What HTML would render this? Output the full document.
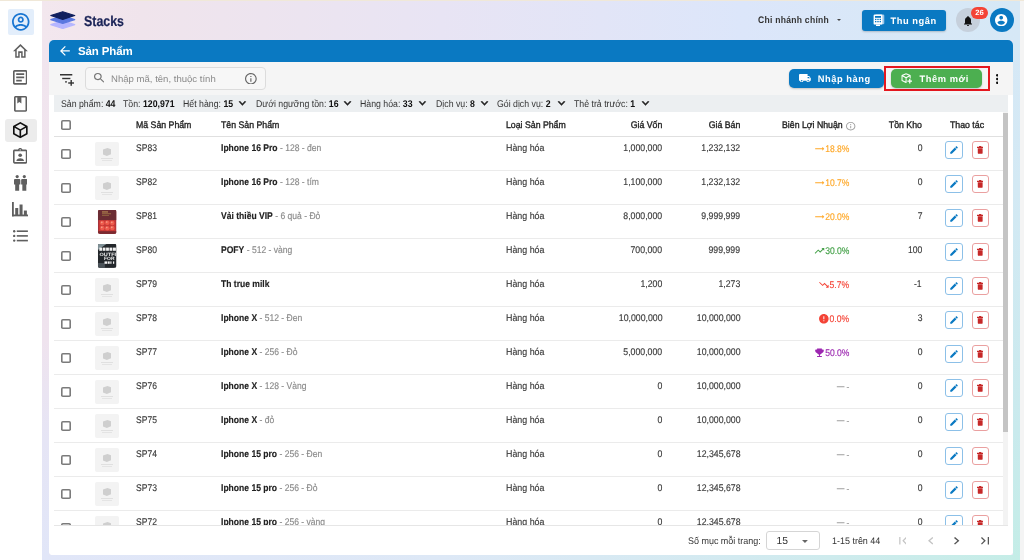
<!DOCTYPE html>
<html lang="vi">
<head>
<meta charset="utf-8">
<title>Stacks - Sản Phẩm</title>
<style>
*{box-sizing:border-box;margin:0;padding:0}
html,body{width:1024px;height:560px;overflow:hidden}
body{font-family:"Liberation Sans",sans-serif;color:#333;position:relative;text-rendering:geometricPrecision;
 background:
  linear-gradient(to bottom,#f1e5ee 0px,#efe3ee 300px,#e6e5f5 400px,#e1e6f8 520px) 42px 40px/7px 520px no-repeat,
  linear-gradient(to bottom,#d6e8f6 0px,#d3e9f4 150px,#c9eaed 390px,#c4ede7 520px) 1013px 40px/7px 520px no-repeat,
  linear-gradient(to right,#e1e6f8 0px,#dde8f6 400px,#d2eaf0 700px,#c5ede7 978px) 42px 555px/978px 5px no-repeat,
  linear-gradient(to right,#f3e7ee 0px,#f0e4ec 100px,#ece4f0 260px,#e8e4f4 400px,#e2e5f7 560px,#dce6fa 700px,#d8e8f7 860px,#d6e8f6 978px) 42px 0px/978px 40px no-repeat,
  #e6e6f4;}
.abs{position:absolute}
#app{position:absolute;left:0;top:0;width:1024px;height:560px;will-change:transform}
#topline{left:0;top:0;width:1024px;height:1px;background:#f0e8d8;z-index:20}
#pgscroll{left:1020px;top:1px;width:4px;height:559px;background:#f4f4f4}
#side{left:0;top:0;width:42px;height:560px;background:#fff}
#side .act1{left:8px;top:9px;width:26px;height:25.500px;background:#e3eefb;border-radius:2px}
#side .act2{left:5px;top:119px;width:31.500px;height:23px;background:#ececec;border-radius:3px}
/* header */
#logo{left:50.400px;top:10.800px;width:25.500px;height:18.100px}
#brand{left:84px;top:13px;font-size:14.500px;font-weight:bold;color:#1b2457;line-height:18px;transform:scaleX(.855);transform-origin:0 50%;-webkit-text-stroke:0.200px #1b2457}
#branch{left:758px;top:15px;font-size:9.500px;font-weight:bold;color:#333;letter-spacing:0.300px;line-height:12px;white-space:nowrap;transform:scaleX(.9);transform-origin:0 50%}
#caret{left:837.300px;top:19.400px;width:0;height:0;border-left:2.400px solid transparent;border-right:2.400px solid transparent;border-top:2.600px solid #444}
.btn{position:absolute;color:#fff;font-weight:bold;font-size:9.300px;letter-spacing:0.550px;border-radius:5px;white-space:nowrap;line-height:13px}
#cashier{left:862.200px;top:10px;width:84px;height:20.600px;background:#0a79c2;border-radius:3px;box-shadow:0 1px 2px rgba(0,0,0,.2)}
#cashier span{position:absolute;left:28.300px;top:5.300px}
#bell{left:956px;top:8px;width:24px;height:24px;border-radius:50%;background:#c6d0dc}
#badge{left:971px;top:6.800px;width:17px;height:12px;border-radius:6px;background:#f44336;color:#fff;font-size:7.600px;font-weight:bold;text-align:center;line-height:12px}
#avatar{left:989.600px;top:8.200px;width:24px;height:24px;border-radius:50%;background:#0a79c2}
/* card */
#card{left:49px;top:40px;width:964px;height:515px;background:#fff;border-radius:5px 5px 4px 4px;overflow:hidden}
#title{left:0;top:0;width:964px;height:22px;background:#0a79c2}
#title span{position:absolute;left:29px;top:4.500px;color:#fff;font-weight:bold;font-size:11.500px;line-height:14px;white-space:nowrap;letter-spacing:-0.140px}
#tool{left:0;top:22px;width:964px;height:33px;background:#f5f5f5}
#search{left:36px;top:5px;width:181px;height:23px;border:1px solid #dcdcdc;border-radius:4px;background:#f7f7f7}
#search span{position:absolute;left:25px;top:5px;font-size:9.300px;color:#8a8a8a;white-space:nowrap;line-height:12px;transform:scaleX(1.029);transform-origin:0 50%}
#import{left:740.400px;top:6.700px;width:94.400px;height:19.400px;background:#0a79c2;box-shadow:0 1px 2px rgba(0,0,0,.2)}
#import span{position:absolute;left:28.400px;top:4.400px}
#redbox{left:835.200px;top:3.800px;width:105.600px;height:24.900px;border:2px solid #e5171f}
#addnew{left:842px;top:6.800px;width:91px;height:19.200px;background:#4caf50;box-shadow:0 1px 2px rgba(0,0,0,.2)}
#addnew span{position:absolute;left:28.600px;top:4.300px}
#stats{left:5px;top:55px;width:954px;height:17px;background:#eceff1;font-size:9.800px;color:#333;white-space:nowrap;line-height:17px}
#stats b{color:#111}
#stats span{position:absolute;top:0.600px;transform:scaleX(.893);transform-origin:0 50%}
/* table */
#tbl{left:5px;top:72px;width:954px;height:414px;overflow:hidden;border-bottom:1px solid #e6e6e6}
#thead{left:0;top:0;width:949px;height:25px;border-bottom:1px solid #e0e0e0;font-size:9.500px;color:#222;background:#fff;-webkit-text-stroke:0.350px #222}
#thead span{position:absolute;top:8px;line-height:12px;white-space:nowrap;transform:scaleX(.92);transform-origin:0 50%}
#thead span.cost,#thead span.price,#thead span.stock,.row span.cost,.row span.price,.row span.stock,.row span.margin{transform-origin:100% 50%}
.row{position:absolute;left:0;width:949px;height:34px;border-bottom:1px solid #ebebeb;font-size:9.700px;color:#3a3a3a}
.row span{position:absolute;top:6px;line-height:12px;white-space:nowrap;transform:scaleX(.883);transform-origin:0 50%}
.cb{position:absolute;left:7.100px;width:10.300px;height:10.300px;border-radius:1.800px;background:#fff;box-shadow:inset 0 0 0 1.600px #7b7b7b}
.row .cb{top:12px}
.img{position:absolute;left:41px;top:5px;width:24px;height:24px;border-radius:2px;background:#f3f3f3}
.code{left:82px}
.name{left:167px;color:#8a8a8a}
.name b{color:#222}
.type{left:452px}
.r{text-align:right}
.cost{right:340.500px}
.price{right:262.500px}
.margin{right:154px}
.stock{right:81px}
.eb,.db{position:absolute;top:4.200px;width:17.600px;height:17.600px;border-radius:3px;background:#fff}
.eb{left:891.200px;border:1px solid #8cc0e8}
.db{left:917.600px;border:1px solid #eaa0a0}
#vscroll{left:949px;top:0;width:5px;height:413px;background:#f3f3f3}
#vthumb{left:949px;top:1px;width:5px;height:318.500px;background:#c4c4c4}
#pager{left:0;top:486px;width:964px;height:29px;background:#fff;font-size:9.500px;color:#333}
#pager span{position:absolute;top:10px;line-height:12px;white-space:nowrap;transform:scaleX(.943);transform-origin:0 50%}
#psel{left:717px;top:5.200px;width:54px;height:19.200px;border:1px solid #d5d5d5;border-radius:3px}
.mi{display:inline-block;width:13px;height:11.500px;vertical-align:-2.500px;margin-right:0}
.eb svg{position:absolute;left:3px;top:3.200px;width:10px;height:10px}
.db svg{position:absolute;left:4.500px;top:4px;width:6.400px;height:7.800px}
.img svg{width:24px;height:24px;display:block}
.ic{position:absolute;display:block}
.chev{position:absolute;top:5px;width:8px;height:8px}
.row span.cost,.row span.price{transform:scaleX(.9)}
.row span.type{transform:scaleX(.915)}
.row span{-webkit-text-stroke:0.150px}
</style>
</head>
<body>
<div id="app">
<div id="topline" class="abs"></div>
<div id="side" class="abs">
 <div class="abs act1"></div>
 <div class="abs act2"></div>

 <svg class="ic" style="left:12.10px;top:12.90px;width:17.50px;height:17.70px" viewBox="2 2 20 20" preserveAspectRatio="none"><path fill="#1976d2" d="M12 2C6.480 2 2 6.480 2 12s4.480 10 10 10 10-4.480 10-10S17.520 2 12 2zM7.070 18.280c.43-.9 3.050-1.780 4.930-1.780s4.510.88 4.930 1.780C15.570 19.360 13.860 20 12 20s-3.570-.64-4.930-1.720zm11.290-1.450c-1.430-1.740-4.900-2.330-6.360-2.330s-4.930.59-6.360 2.330A7.950 7.950 0 014 12c0-4.410 3.590-8 8-8s8 3.590 8 8c0 1.820-.62 3.490-1.640 4.830zM12 6c-1.940 0-3.500 1.560-3.500 3.500S10.060 13 12 13s3.500-1.560 3.500-3.500S13.940 6 12 6zm0 5c-.83 0-1.500-.67-1.500-1.500S11.170 8 12 8s1.500.67 1.500 1.500S12.830 11 12 11z"/></svg>
 <svg class="ic" style="left:12.90px;top:44.00px;width:14.85px;height:13.75px" viewBox="2 3 20 17" preserveAspectRatio="none"><path fill="#5f5f5f" d="M12 5.690l5 4.500V18h-2v-6H9v6H7v-7.810l5-4.500M12 3L2 12h3v8h6v-6h2v6h6v-8h3L12 3z"/></svg>
 <svg class="ic" style="left:13.10px;top:70.10px;width:14.40px;height:14.65px" viewBox="3 3 18 18" preserveAspectRatio="none"><path fill="#5f5f5f" d="M19 5v14H5V5h14m0-2H5c-1.100 0-2 .9-2 2v14c0 1.100.9 2 2 2h14c1.100 0 2-.9 2-2V5c0-1.100-.9-2-2-2zM14 17H7v-2h7v2zm3-4H7v-2h10v2zm0-4H7V7h10v2z"/></svg>
 <svg class="ic" style="left:13.75px;top:96.00px;width:13.15px;height:15.75px" viewBox="4 2 16 20" preserveAspectRatio="none"><path fill="#5f5f5f" d="M18 2H6c-1.100 0-2 .9-2 2v16c0 1.100.9 2 2 2h12c1.100 0 2-.9 2-2V4c0-1.100-.9-2-2-2zm0 18H6V4h12v16z"/><path fill="#5f5f5f" d="M8 3h5v8.500l-2.500-1.800L8 11.500z"/></svg>
 <svg class="ic" style="left:13.10px;top:122.25px;width:14.65px;height:16.25px" viewBox="3 2 18 20" preserveAspectRatio="none"><path fill="#111" d="M21 16.500c0 .38-.21.71-.53.88l-7.900 4.440c-.16.12-.36.180-.57.180s-.41-.06-.57-.18l-7.900-4.440A.991.991 0 013 16.500v-9c0-.38.210-.71.530-.88l7.900-4.440c.16-.12.360-.18.570-.18s.41.060.57.180l7.900 4.440c.32.170.53.500.53.880v9M12 4.150L6.040 7.500 12 10.850l5.960-3.350L12 4.150M5 15.910l6 3.380v-6.710L5 9.210v6.700m14 0v-6.700l-6 3.370v6.710l6-3.380z"/></svg>
 <svg class="ic" style="left:13.10px;top:148.25px;width:14.40px;height:15.65px" viewBox="3 1 18 20" preserveAspectRatio="none"><path fill="#5f5f5f" d="M19 3h-4.180C14.400 1.840 13.300 1 12 1s-2.400.84-2.820 2H5c-1.100 0-2 .9-2 2v14c0 1.100.9 2 2 2h14c1.100 0 2-.9 2-2V5c0-1.100-.9-2-2-2zm-7-.25c.41 0 .75.340.75.750s-.34.750-.75.750-.75-.34-.75-.75.340-.75.750-.75zM19 19H5V5h14v14z"/><circle cx="12" cy="10.200" r="2.300" fill="#5f5f5f"/><path fill="#5f5f5f" d="M7.200 17.200c0-2.200 3.200-3.200 4.800-3.200s4.800 1 4.800 3.200v.5H7.200z"/></svg>
 <svg class="ic" style="left:13.90px;top:175.30px;width:13.50px;height:15.80px" viewBox="0 0 17 20" preserveAspectRatio="none"><g fill="#5f5f5f"><circle cx="4" cy="2" r="2"/><path d="M1.500 5h5c.8 0 1.500.7 1.500 1.500V12H6.500v8h-5v-8H0V6.500C0 5.700.7 5 1.500 5z"/><circle cx="13" cy="2" r="2"/><path d="M10.500 5h5c.8 0 1.500.7 1.500 1.500V12h-1.500v8h-5v-8H9V6.500C9 5.700 9.700 5 10.500 5z"/></g></svg>
 <svg class="ic" style="left:12.40px;top:202.40px;width:16.10px;height:14.35px" viewBox="0 0 16 14.300" preserveAspectRatio="none"><g fill="#5f5f5f"><rect x="0" y="0" width="1.800" height="14.300"/><rect x="0" y="12.500" width="16" height="1.800"/><rect x="3.200" y="6" width="3" height="7"/><rect x="7.500" y="2.500" width="3" height="10.500"/><rect x="11.800" y="8.500" width="3" height="4.500"/></g></svg>
 <svg class="ic" style="left:12.90px;top:230.20px;width:14.90px;height:11.80px" viewBox="0 0 15 11.800" preserveAspectRatio="none"><g fill="#5f5f5f"><circle cx="1.200" cy="1.200" r="1.200"/><circle cx="1.200" cy="5.900" r="1.200"/><circle cx="1.200" cy="10.600" r="1.200"/><rect x="3.800" y="0.400" width="11.200" height="1.600"/><rect x="3.800" y="5.100" width="11.200" height="1.600"/><rect x="3.800" y="9.800" width="11.200" height="1.600"/></g></svg>
</div>
<div id="pgscroll" class="abs"></div>

<svg id="logo" class="abs" viewBox="0 0 25.500 18.100">
 <polygon points="12.750,9.700 24.700,13.600 12.750,17.500 0.800,13.600" fill="#b5b6ff" stroke="#b5b6ff" stroke-width="1.200" stroke-linejoin="round"/>
 <polygon points="12.750,4.800 24.700,8.600 12.750,12.500 0.800,8.600" fill="#5a78e0" stroke="#5a78e0" stroke-width="1.200" stroke-linejoin="round"/>
 <polygon points="12.750,0.700 24.700,4.500 12.750,8.400 0.800,4.500" fill="#101f5e" stroke="#101f5e" stroke-width="1.200" stroke-linejoin="round"/>
</svg>
<div id="brand" class="abs">Stacks</div>
<div id="branch" class="abs">Chi nhánh chính</div>
<div id="caret" class="abs"></div>
<div id="cashier" class="abs btn"><span>Thu ngân</span></div>
<div id="bell" class="abs"></div>
<div id="badge" class="abs">26</div>
<div id="avatar" class="abs"></div>

<div id="card" class="abs">
 <div id="title" class="abs"><span>Sản Phẩm</span></div>
 <div id="tool" class="abs">
  <div id="search" class="abs"><span>Nhập mã, tên, thuộc tính</span></div>
  <div id="import" class="abs btn"><span>Nhập hàng</span></div>
  <div id="redbox" class="abs"></div>
  <div id="addnew" class="abs btn"><span>Thêm mới</span></div>
 </div>
 <div id="stats" class="abs">
  <span id="st1" style="left:7px">Sản phẩm: <b>44</b></span>
  <span id="st2" style="left:69px">Tồn: <b>120,971</b></span>
  <span id="st3" style="left:129px">Hết hàng: <b>15</b></span>
  <span id="st4" style="left:202px">Dưới ngưỡng tồn: <b>16</b></span>
  <span id="st5" style="left:306px">Hàng hóa: <b>33</b></span>
  <span id="st6" style="left:382px">Dịch vụ: <b>8</b></span>
  <span id="st7" style="left:443px">Gói dịch vụ: <b>2</b></span>
  <span id="st8" style="left:520px">Thẻ trả trước: <b>1</b></span>
 </div>
 <div id="tbl" class="abs">
  <div class="row" style="top:25px"><div class="cb"></div><div class="img"><svg viewBox="0 0 24 24"><path d="M8 7.500l4.500-1.500 3.500 1.200v5l-4.200 1.800-3.800-1.500z" fill="#cfcfcf"/><rect x="6" y="16" width="12" height="1" fill="#e0e0e0"/><rect x="7" y="18" width="10" height="1" fill="#e4e4e4"/></svg></div><span class="code">SP83</span><span class="name"><b>Iphone 16 Pro</b> - 128 - đen</span><span class="type">Hàng hóa</span><span class="cost">1,000,000</span><span class="price">1,232,132</span><span class="margin" style="color:#ffa726"><svg class="mi" viewBox="0 0 24 24" preserveAspectRatio="none"><path d="M22 12l-4-4v3H3v2h15v3z" fill="currentColor"/></svg>18.8%</span><span class="stock">0</span><div class="eb"><svg viewBox="0 0 24 24"><path d="M3 17.25V21h3.75L17.81 9.94l-3.75-3.75L3 17.25zM20.71 7.04a1 1 0 000-1.41l-2.34-2.34a1 1 0 00-1.41 0l-1.83 1.83 3.75 3.75 1.83-1.83z" fill="#0a79c2"/></svg></div><div class="db"><svg viewBox="0 0 10 12" preserveAspectRatio="none"><path d="M3.200 0h3.600v1.200H10v1.800H0V1.200h3.200zM1.200 3.600h7.600V10.600c0 .8-.6 1.400-1.400 1.400H2.600c-.8 0-1.400-.6-1.400-1.400z" fill="#c62828"/></svg></div></div>
<div class="row" style="top:59px"><div class="cb"></div><div class="img"><svg viewBox="0 0 24 24"><path d="M8 7.500l4.500-1.500 3.500 1.200v5l-4.200 1.800-3.800-1.500z" fill="#cfcfcf"/><rect x="6" y="16" width="12" height="1" fill="#e0e0e0"/><rect x="7" y="18" width="10" height="1" fill="#e4e4e4"/></svg></div><span class="code">SP82</span><span class="name"><b>Iphone 16 Pro</b> - 128 - tím</span><span class="type">Hàng hóa</span><span class="cost">1,100,000</span><span class="price">1,232,132</span><span class="margin" style="color:#ffa726"><svg class="mi" viewBox="0 0 24 24" preserveAspectRatio="none"><path d="M22 12l-4-4v3H3v2h15v3z" fill="currentColor"/></svg>10.7%</span><span class="stock">0</span><div class="eb"><svg viewBox="0 0 24 24"><path d="M3 17.25V21h3.75L17.81 9.94l-3.75-3.75L3 17.25zM20.71 7.04a1 1 0 000-1.41l-2.34-2.34a1 1 0 00-1.41 0l-1.83 1.83 3.75 3.75 1.83-1.83z" fill="#0a79c2"/></svg></div><div class="db"><svg viewBox="0 0 10 12" preserveAspectRatio="none"><path d="M3.200 0h3.600v1.200H10v1.800H0V1.200h3.200zM1.200 3.600h7.600V10.600c0 .8-.6 1.400-1.400 1.400H2.600c-.8 0-1.400-.6-1.400-1.400z" fill="#c62828"/></svg></div></div>
<div class="row" style="top:93px"><div class="cb"></div><div class="img" style="background:none"><svg viewBox="0 0 24 24"><defs><clipPath id="cpr"><rect x="2.900" y="-0.400" width="18.600" height="24.300" rx="2.500"/></clipPath></defs><g clip-path="url(#cpr)"><rect x="2.900" y="-0.400" width="18.600" height="24.300" fill="#a8323a"/><rect x="2.900" y="-0.400" width="18.600" height="10.500" fill="#6b2c33"/><rect x="7" y="1.500" width="6" height="0.900" fill="#c9a15a"/><rect x="7" y="3.400" width="9" height="0.800" fill="#a8804a"/><rect x="7" y="5.200" width="7" height="0.800" fill="#946a40"/><rect x="4" y="10.100" width="16.500" height="11" fill="#c93a36"/><g fill="#ee5a4c"><circle cx="7.300" cy="13" r="2.300"/><circle cx="12.300" cy="12.700" r="2.300"/><circle cx="17.300" cy="13" r="2.300"/><circle cx="7.300" cy="18" r="2.300"/><circle cx="12.300" cy="18.200" r="2.300"/><circle cx="17.300" cy="18" r="2.300"/></g><g fill="#f6a08c"><circle cx="6.800" cy="12.400" r="0.800"/><circle cx="11.800" cy="12.100" r="0.800"/><circle cx="16.800" cy="12.400" r="0.800"/><circle cx="6.800" cy="17.400" r="0.800"/><circle cx="11.800" cy="17.600" r="0.800"/><circle cx="16.800" cy="17.400" r="0.800"/></g><rect x="2.900" y="21.300" width="18.600" height="2.600" fill="#7a2a30"/></g></svg></div><span class="code">SP81</span><span class="name"><b>Vải thiều VIP</b> - 6 quả - Đỏ</span><span class="type">Hàng hóa</span><span class="cost">8,000,000</span><span class="price">9,999,999</span><span class="margin" style="color:#ffa726"><svg class="mi" viewBox="0 0 24 24" preserveAspectRatio="none"><path d="M22 12l-4-4v3H3v2h15v3z" fill="currentColor"/></svg>20.0%</span><span class="stock">7</span><div class="eb"><svg viewBox="0 0 24 24"><path d="M3 17.25V21h3.75L17.81 9.94l-3.75-3.75L3 17.25zM20.71 7.04a1 1 0 000-1.41l-2.34-2.34a1 1 0 00-1.41 0l-1.83 1.83 3.75 3.75 1.83-1.83z" fill="#0a79c2"/></svg></div><div class="db"><svg viewBox="0 0 10 12" preserveAspectRatio="none"><path d="M3.200 0h3.600v1.200H10v1.800H0V1.200h3.200zM1.200 3.600h7.600V10.600c0 .8-.6 1.400-1.400 1.400H2.600c-.8 0-1.400-.6-1.400-1.400z" fill="#c62828"/></svg></div></div>
<div class="row" style="top:127px"><div class="cb"></div><div class="img" style="background:none"><svg viewBox="0 0 24 24"><defs><clipPath id="cpd"><rect x="2.900" y="-0.400" width="18.600" height="24.300" rx="2.500"/></clipPath></defs><g clip-path="url(#cpd)"><rect x="2.900" y="-0.400" width="18.600" height="24.300" fill="#23272b"/><polygon points="2.900,-0.400 12,-0.400 2.900,6" fill="#7f9096"/><rect x="2.900" y="19" width="7" height="5" fill="#4a5258"/><g fill="#f2f2f2" font-family="Liberation Sans, sans-serif" font-weight="bold" font-size="4.600"><rect x="4.300" y="3.600" width="3" height="3.200"/><rect x="7.900" y="3.600" width="2.600" height="3.200"/><rect x="11.100" y="3.600" width="2.800" height="3.200"/><rect x="14.500" y="3.600" width="2.800" height="3.200"/><rect x="17.900" y="3.600" width="3" height="3.200"/><text x="4.600" y="11.600" textLength="16.500" lengthAdjust="spacingAndGlyphs">OUTFI</text><text x="9" y="16" textLength="10.500" lengthAdjust="spacingAndGlyphs">FOR</text><rect x="9.500" y="17.400" width="2.600" height="2.400"/><rect x="12.700" y="17.400" width="2" height="2.400"/><rect x="15.300" y="17.400" width="1.200" height="2.400"/><rect x="18" y="17.400" width="1.200" height="2.400"/></g></g></svg></div><span class="code">SP80</span><span class="name"><b>POFY</b> - 512 - vàng</span><span class="type">Hàng hóa</span><span class="cost">700,000</span><span class="price">999,999</span><span class="margin" style="color:#43a047"><svg class="mi" viewBox="0 0 24 24" preserveAspectRatio="none"><path d="M16 6l2.29 2.29-4.88 4.88-4-4L2 16.59 3.41 18l6-6 4 4 6.3-6.29L22 12V6z" fill="currentColor"/></svg>30.0%</span><span class="stock">100</span><div class="eb"><svg viewBox="0 0 24 24"><path d="M3 17.25V21h3.75L17.81 9.94l-3.75-3.75L3 17.25zM20.71 7.04a1 1 0 000-1.41l-2.34-2.34a1 1 0 00-1.41 0l-1.83 1.83 3.75 3.75 1.83-1.83z" fill="#0a79c2"/></svg></div><div class="db"><svg viewBox="0 0 10 12" preserveAspectRatio="none"><path d="M3.200 0h3.600v1.200H10v1.800H0V1.200h3.200zM1.200 3.600h7.600V10.600c0 .8-.6 1.400-1.400 1.400H2.600c-.8 0-1.400-.6-1.400-1.400z" fill="#c62828"/></svg></div></div>
<div class="row" style="top:161px"><div class="cb"></div><div class="img"><svg viewBox="0 0 24 24"><path d="M8 7.500l4.500-1.500 3.500 1.200v5l-4.200 1.800-3.800-1.500z" fill="#cfcfcf"/><rect x="6" y="16" width="12" height="1" fill="#e0e0e0"/><rect x="7" y="18" width="10" height="1" fill="#e4e4e4"/></svg></div><span class="code">SP79</span><span class="name"><b>Th true milk</b></span><span class="type">Hàng hóa</span><span class="cost">1,200</span><span class="price">1,273</span><span class="margin" style="color:#f44336"><svg class="mi" viewBox="0 0 24 24" preserveAspectRatio="none"><path d="M16 18l2.29-2.29-4.88-4.88-4 4L2 7.41 3.41 6l6 6 4-4 6.3 6.29L22 12v6z" fill="currentColor"/></svg>5.7%</span><span class="stock">-1</span><div class="eb"><svg viewBox="0 0 24 24"><path d="M3 17.25V21h3.75L17.81 9.94l-3.75-3.75L3 17.25zM20.71 7.04a1 1 0 000-1.41l-2.34-2.34a1 1 0 00-1.41 0l-1.83 1.83 3.75 3.75 1.83-1.83z" fill="#0a79c2"/></svg></div><div class="db"><svg viewBox="0 0 10 12" preserveAspectRatio="none"><path d="M3.200 0h3.600v1.200H10v1.800H0V1.200h3.200zM1.200 3.600h7.600V10.600c0 .8-.6 1.400-1.400 1.400H2.600c-.8 0-1.400-.6-1.400-1.400z" fill="#c62828"/></svg></div></div>
<div class="row" style="top:195px"><div class="cb"></div><div class="img"><svg viewBox="0 0 24 24"><path d="M8 7.500l4.500-1.500 3.500 1.200v5l-4.200 1.800-3.800-1.500z" fill="#cfcfcf"/><rect x="6" y="16" width="12" height="1" fill="#e0e0e0"/><rect x="7" y="18" width="10" height="1" fill="#e4e4e4"/></svg></div><span class="code">SP78</span><span class="name"><b>Iphone X</b> - 512 - Đen</span><span class="type">Hàng hóa</span><span class="cost">10,000,000</span><span class="price">10,000,000</span><span class="margin" style="color:#f44336"><svg class="mi" viewBox="0 0 24 24" preserveAspectRatio="none"><path d="M12 2C6.48 2 2 6.48 2 12s4.48 10 10 10 10-4.48 10-10S17.52 2 12 2zm1 15h-2v-2h2v2zm0-4h-2V7h2v6z" fill="currentColor"/></svg>0.0%</span><span class="stock">3</span><div class="eb"><svg viewBox="0 0 24 24"><path d="M3 17.25V21h3.75L17.81 9.94l-3.75-3.75L3 17.25zM20.71 7.04a1 1 0 000-1.41l-2.34-2.34a1 1 0 00-1.41 0l-1.83 1.83 3.75 3.75 1.83-1.83z" fill="#0a79c2"/></svg></div><div class="db"><svg viewBox="0 0 10 12" preserveAspectRatio="none"><path d="M3.200 0h3.600v1.200H10v1.800H0V1.200h3.200zM1.200 3.600h7.600V10.600c0 .8-.6 1.400-1.400 1.400H2.600c-.8 0-1.400-.6-1.400-1.400z" fill="#c62828"/></svg></div></div>
<div class="row" style="top:229px"><div class="cb"></div><div class="img"><svg viewBox="0 0 24 24"><path d="M8 7.500l4.500-1.500 3.500 1.200v5l-4.200 1.800-3.800-1.500z" fill="#cfcfcf"/><rect x="6" y="16" width="12" height="1" fill="#e0e0e0"/><rect x="7" y="18" width="10" height="1" fill="#e4e4e4"/></svg></div><span class="code">SP77</span><span class="name"><b>Iphone X</b> - 256 - Đỏ</span><span class="type">Hàng hóa</span><span class="cost">5,000,000</span><span class="price">10,000,000</span><span class="margin" style="color:#9c27b0"><svg class="mi" viewBox="0 0 24 24" preserveAspectRatio="none"><path d="M19 5h-2V3H7v2H5c-1.1 0-2 .9-2 2v1c0 2.55 1.92 4.63 4.39 4.94.63 1.5 1.98 2.63 3.61 2.96V19H7v2h10v-2h-4v-3.1c1.63-.33 2.98-1.46 3.61-2.96C19.08 12.63 21 10.55 21 8V7c0-1.1-.9-2-2-2z" fill="currentColor"/></svg>50.0%</span><span class="stock">0</span><div class="eb"><svg viewBox="0 0 24 24"><path d="M3 17.25V21h3.75L17.81 9.94l-3.75-3.75L3 17.25zM20.71 7.04a1 1 0 000-1.41l-2.34-2.34a1 1 0 00-1.41 0l-1.83 1.83 3.75 3.75 1.83-1.83z" fill="#0a79c2"/></svg></div><div class="db"><svg viewBox="0 0 10 12" preserveAspectRatio="none"><path d="M3.200 0h3.600v1.200H10v1.800H0V1.200h3.200zM1.200 3.600h7.600V10.600c0 .8-.6 1.400-1.400 1.400H2.600c-.8 0-1.400-.6-1.400-1.400z" fill="#c62828"/></svg></div></div>
<div class="row" style="top:263px"><div class="cb"></div><div class="img"><svg viewBox="0 0 24 24"><path d="M8 7.500l4.500-1.500 3.500 1.200v5l-4.200 1.800-3.800-1.500z" fill="#cfcfcf"/><rect x="6" y="16" width="12" height="1" fill="#e0e0e0"/><rect x="7" y="18" width="10" height="1" fill="#e4e4e4"/></svg></div><span class="code">SP76</span><span class="name"><b>Iphone X</b> - 128 - Vàng</span><span class="type">Hàng hóa</span><span class="cost">0</span><span class="price">10,000,000</span><span class="margin" style="color:#9e9e9e"><svg class="mi" viewBox="0 0 24 24" preserveAspectRatio="none"><path d="M4 11h16v2H4z" fill="currentColor"/></svg>-</span><span class="stock">0</span><div class="eb"><svg viewBox="0 0 24 24"><path d="M3 17.25V21h3.75L17.81 9.94l-3.75-3.75L3 17.25zM20.71 7.04a1 1 0 000-1.41l-2.34-2.34a1 1 0 00-1.41 0l-1.83 1.83 3.75 3.75 1.83-1.83z" fill="#0a79c2"/></svg></div><div class="db"><svg viewBox="0 0 10 12" preserveAspectRatio="none"><path d="M3.200 0h3.600v1.200H10v1.800H0V1.200h3.200zM1.200 3.600h7.600V10.600c0 .8-.6 1.400-1.400 1.400H2.600c-.8 0-1.400-.6-1.400-1.400z" fill="#c62828"/></svg></div></div>
<div class="row" style="top:297px"><div class="cb"></div><div class="img"><svg viewBox="0 0 24 24"><path d="M8 7.500l4.500-1.500 3.500 1.200v5l-4.200 1.800-3.800-1.500z" fill="#cfcfcf"/><rect x="6" y="16" width="12" height="1" fill="#e0e0e0"/><rect x="7" y="18" width="10" height="1" fill="#e4e4e4"/></svg></div><span class="code">SP75</span><span class="name"><b>Iphone X</b> - đỏ</span><span class="type">Hàng hóa</span><span class="cost">0</span><span class="price">10,000,000</span><span class="margin" style="color:#9e9e9e"><svg class="mi" viewBox="0 0 24 24" preserveAspectRatio="none"><path d="M4 11h16v2H4z" fill="currentColor"/></svg>-</span><span class="stock">0</span><div class="eb"><svg viewBox="0 0 24 24"><path d="M3 17.25V21h3.75L17.81 9.94l-3.75-3.75L3 17.25zM20.71 7.04a1 1 0 000-1.41l-2.34-2.34a1 1 0 00-1.41 0l-1.83 1.83 3.75 3.75 1.83-1.83z" fill="#0a79c2"/></svg></div><div class="db"><svg viewBox="0 0 10 12" preserveAspectRatio="none"><path d="M3.200 0h3.600v1.200H10v1.800H0V1.200h3.200zM1.200 3.600h7.600V10.600c0 .8-.6 1.400-1.400 1.400H2.600c-.8 0-1.400-.6-1.400-1.400z" fill="#c62828"/></svg></div></div>
<div class="row" style="top:331px"><div class="cb"></div><div class="img"><svg viewBox="0 0 24 24"><path d="M8 7.500l4.500-1.500 3.500 1.200v5l-4.200 1.800-3.800-1.500z" fill="#cfcfcf"/><rect x="6" y="16" width="12" height="1" fill="#e0e0e0"/><rect x="7" y="18" width="10" height="1" fill="#e4e4e4"/></svg></div><span class="code">SP74</span><span class="name"><b>Iphone 15 pro</b> - 256 - Đen</span><span class="type">Hàng hóa</span><span class="cost">0</span><span class="price">12,345,678</span><span class="margin" style="color:#9e9e9e"><svg class="mi" viewBox="0 0 24 24" preserveAspectRatio="none"><path d="M4 11h16v2H4z" fill="currentColor"/></svg>-</span><span class="stock">0</span><div class="eb"><svg viewBox="0 0 24 24"><path d="M3 17.25V21h3.75L17.81 9.94l-3.75-3.75L3 17.25zM20.71 7.04a1 1 0 000-1.41l-2.34-2.34a1 1 0 00-1.41 0l-1.83 1.83 3.75 3.75 1.83-1.83z" fill="#0a79c2"/></svg></div><div class="db"><svg viewBox="0 0 10 12" preserveAspectRatio="none"><path d="M3.200 0h3.600v1.200H10v1.800H0V1.200h3.200zM1.200 3.600h7.600V10.600c0 .8-.6 1.400-1.400 1.400H2.600c-.8 0-1.400-.6-1.400-1.400z" fill="#c62828"/></svg></div></div>
<div class="row" style="top:365px"><div class="cb"></div><div class="img"><svg viewBox="0 0 24 24"><path d="M8 7.500l4.500-1.500 3.500 1.200v5l-4.200 1.800-3.800-1.500z" fill="#cfcfcf"/><rect x="6" y="16" width="12" height="1" fill="#e0e0e0"/><rect x="7" y="18" width="10" height="1" fill="#e4e4e4"/></svg></div><span class="code">SP73</span><span class="name"><b>Iphone 15 pro</b> - 256 - Đỏ</span><span class="type">Hàng hóa</span><span class="cost">0</span><span class="price">12,345,678</span><span class="margin" style="color:#9e9e9e"><svg class="mi" viewBox="0 0 24 24" preserveAspectRatio="none"><path d="M4 11h16v2H4z" fill="currentColor"/></svg>-</span><span class="stock">0</span><div class="eb"><svg viewBox="0 0 24 24"><path d="M3 17.25V21h3.75L17.81 9.94l-3.75-3.75L3 17.25zM20.71 7.04a1 1 0 000-1.41l-2.34-2.34a1 1 0 00-1.41 0l-1.83 1.83 3.75 3.75 1.83-1.83z" fill="#0a79c2"/></svg></div><div class="db"><svg viewBox="0 0 10 12" preserveAspectRatio="none"><path d="M3.200 0h3.600v1.200H10v1.800H0V1.200h3.200zM1.200 3.600h7.600V10.600c0 .8-.6 1.400-1.400 1.400H2.600c-.8 0-1.400-.6-1.400-1.400z" fill="#c62828"/></svg></div></div>
<div class="row" style="top:399px"><div class="cb"></div><div class="img"><svg viewBox="0 0 24 24"><path d="M8 7.500l4.500-1.500 3.500 1.200v5l-4.200 1.800-3.800-1.500z" fill="#cfcfcf"/><rect x="6" y="16" width="12" height="1" fill="#e0e0e0"/><rect x="7" y="18" width="10" height="1" fill="#e4e4e4"/></svg></div><span class="code">SP72</span><span class="name"><b>Iphone 15 pro</b> - 256 - vàng</span><span class="type">Hàng hóa</span><span class="cost">0</span><span class="price">12,345,678</span><span class="margin" style="color:#9e9e9e"><svg class="mi" viewBox="0 0 24 24" preserveAspectRatio="none"><path d="M4 11h16v2H4z" fill="currentColor"/></svg>-</span><span class="stock">0</span><div class="eb"><svg viewBox="0 0 24 24"><path d="M3 17.25V21h3.75L17.81 9.94l-3.75-3.75L3 17.25zM20.71 7.04a1 1 0 000-1.41l-2.34-2.34a1 1 0 00-1.41 0l-1.83 1.83 3.75 3.75 1.83-1.83z" fill="#0a79c2"/></svg></div><div class="db"><svg viewBox="0 0 10 12" preserveAspectRatio="none"><path d="M3.200 0h3.600v1.200H10v1.800H0V1.200h3.200zM1.200 3.600h7.600V10.600c0 .8-.6 1.400-1.400 1.400H2.600c-.8 0-1.400-.6-1.400-1.400z" fill="#c62828"/></svg></div></div>
  <div id="thead" class="abs">
   <div class="cb" style="top:7.700px"></div>
   <span class="code">Mã Sản Phẩm</span>
   <span class="hname" style="left:167px">Tên Sản Phẩm</span>
   <span class="type">Loại Sản Phẩm</span>
   <span class="cost">Giá Vốn</span>
   <span class="price">Giá Bán</span>
   <span class="hmargin" style="left:728px">Biên Lợi Nhuận</span>
   <span class="stock">Tồn Kho</span>
   <span class="hact" style="left:896px">Thao tác</span>
  </div>
  <div id="vscroll" class="abs"></div>
  <div id="vthumb" class="abs"></div>
 </div>
 <div id="pager" class="abs">
  <span id="pg1" style="left:639px">Số mục mỗi trang:</span>
  <div id="psel" class="abs"><span id="pg2" style="left:9.500px;top:3.500px;font-size:10.300px;transform:none">15</span></div>
  <span id="pg3" style="left:783px">1-15 trên 44</span>
 </div>
</div>
<div id="ov" class="abs" style="left:0;top:0;width:0;height:0;z-index:10">
<svg class="ic" style="left:60.00px;top:46.00px;width:9.80px;height:9.80px" viewBox="4 4 16 16" preserveAspectRatio="none"><path fill="#fff" d="M20 11H7.830l5.590-5.590L12 4l-8 8 8 8 1.410-1.410L7.830 13H20v-2z"/></svg>
<svg class="ic" style="left:59.80px;top:74.20px;width:14.20px;height:11.80px" viewBox="0 0 14.200 11.800" preserveAspectRatio="none"><g fill="#333"><rect x="0" y="0" width="12.300" height="1.500"/><rect x="2.200" y="3.800" width="8.200" height="1.400"/><rect x="5" y="7.300" width="2" height="1.200"/><rect x="8.200" y="8.300" width="6" height="1.400"/><rect x="10.500" y="6" width="1.400" height="5.800"/></g></svg>
<svg class="ic" style="left:94.00px;top:73.30px;width:10.40px;height:9.60px" viewBox="3 3 17.490 17.490" preserveAspectRatio="none"><path fill="#757575" d="M15.500 14h-.79l-.28-.27A6.471 6.471 0 0016 9.500 6.500 6.500 0 109.500 16c1.610 0 3.090-.59 4.230-1.570l.27.28v.79l5 4.990L20.490 19l-4.990-5zm-6 0C7.010 14 5 11.990 5 9.500S7.010 5 9.500 5 14 7.010 14 9.500 11.990 14 9.500 14z"/></svg>
<svg class="ic" style="left:245.00px;top:72.50px;width:11.75px;height:11.60px" viewBox="2 2 20 20" preserveAspectRatio="none"><path fill="#666" d="M11 7h2v2h-2zm0 4h2v6h-2zm1-9C6.480 2 2 6.480 2 12s4.480 10 10 10 10-4.480 10-10S17.520 2 12 2zm0 18c-4.410 0-8-3.590-8-8s3.590-8 8-8 8 3.590 8 8-3.590 8-8 8z"/></svg>
<svg class="ic" style="left:799.00px;top:74.10px;width:11.80px;height:8.40px" viewBox="1 4 22 16" preserveAspectRatio="none"><path fill="#fff" d="M20 8h-3V4H3c-1.100 0-2 .9-2 2v11h2c0 1.660 1.340 3 3 3s3-1.340 3-3h6c0 1.660 1.340 3 3 3s3-1.340 3-3h2v-5l-3-4zM6 18.500c-.83 0-1.500-.67-1.500-1.500s.67-1.500 1.500-1.500 1.500.67 1.500 1.500-.67 1.500-1.500 1.500zm13.500-9l1.960 2.500H17V9.500h2.500zm-1.500 9c-.83 0-1.500-.67-1.500-1.500s.67-1.500 1.500-1.500 1.500.67 1.500 1.500-.67 1.500-1.500 1.500z"/></svg>
<svg class="ic" style="left:901.20px;top:73.40px;width:11.20px;height:10.50px" viewBox="0 0 22 21" preserveAspectRatio="none"><g fill="none" stroke="#fff" stroke-width="2" stroke-linejoin="round"><path d="M10 1.500L18 5v6M10 1.500L2 5v10l8 4v-9.500L2 5M10 9.500L18 5"/></g><path fill="#fff" d="M16 12h2.500v3H22v2.500h-3.500V21H16v-3.500h-3.500V15H16z"/></svg>
<svg class="ic" style="left:995.90px;top:73.70px;width:2.60px;height:10.10px" viewBox="0 0 2.600 10.100" preserveAspectRatio="none"><g fill="#111"><circle cx="1.300" cy="1.300" r="1.300"/><circle cx="1.300" cy="5.050" r="1.300"/><circle cx="1.300" cy="8.800" r="1.300"/></g></svg>
<svg class="ic" style="left:873.00px;top:13.70px;width:11.70px;height:12.30px" viewBox="0 0 11.700 12.300" preserveAspectRatio="none"><rect x="2.300" y="0.600" width="9" height="9.600" rx="1.200" fill="#9fc8ea"/><rect x="0.600" y="0.600" width="8.800" height="10" rx="1.200" fill="#fff"/><g fill="#0a79c2"><rect x="2" y="2" width="6" height="1.800"/><rect x="2" y="4.800" width="1.400" height="1.300"/><rect x="4.300" y="4.800" width="1.400" height="1.300"/><rect x="6.600" y="4.800" width="1.400" height="1.300"/><rect x="2" y="7" width="1.400" height="1.300"/><rect x="4.300" y="7" width="1.400" height="1.300"/><rect x="6.600" y="7" width="1.400" height="1.300"/></g><rect x="3" y="10.600" width="4" height="1.500" fill="#fff"/></svg>
<svg class="ic" style="left:964.00px;top:15.60px;width:8.00px;height:10.00px" viewBox="4 2.500 16 19.500" preserveAspectRatio="none"><path fill="#111" d="M12 22c1.100 0 2-.9 2-2h-4c0 1.100.89 2 2 2zm6-6v-5c0-3.070-1.640-5.640-4.500-6.320V4c0-.83-.67-1.500-1.500-1.500s-1.500.67-1.500 1.500v.68C7.630 5.360 6 7.920 6 11v5l-2 2v1h16v-1l-2-2z"/></svg>
<svg class="ic" style="left:995.20px;top:14.00px;width:12.40px;height:12.40px" viewBox="2 2 20 20" preserveAspectRatio="none"><path fill="#fff" d="M12 2C6.480 2 2 6.480 2 12s4.480 10 10 10 10-4.480 10-10S17.520 2 12 2zm0 3c1.660 0 3 1.340 3 3s-1.340 3-3 3-3-1.340-3-3 1.340-3 3-3zm0 14.200c-2.500 0-4.710-1.280-6-3.220.03-1.990 4-3.080 6-3.080 1.990 0 5.970 1.090 6 3.080-1.290 1.940-3.500 3.220-6 3.220z"/></svg>
<svg class="ic" style="left:239.20px;top:101.40px;width:6.80px;height:4.50px;overflow:visible" viewBox="6 8.590 12 7.410" preserveAspectRatio="none"><path fill="#222" stroke="#222" stroke-width="0.800" d="M16.590 8.590L12 13.170 7.410 8.590 6 10l6 6 6-6z"/></svg>
<svg class="ic" style="left:343.75px;top:101.40px;width:7.05px;height:4.50px;overflow:visible" viewBox="6 8.590 12 7.410" preserveAspectRatio="none"><path fill="#222" stroke="#222" stroke-width="0.800" d="M16.590 8.590L12 13.170 7.410 8.590 6 10l6 6 6-6z"/></svg>
<svg class="ic" style="left:419.00px;top:101.40px;width:6.80px;height:4.50px;overflow:visible" viewBox="6 8.590 12 7.410" preserveAspectRatio="none"><path fill="#222" stroke="#222" stroke-width="0.800" d="M16.590 8.590L12 13.170 7.410 8.590 6 10l6 6 6-6z"/></svg>
<svg class="ic" style="left:480.50px;top:101.40px;width:7.00px;height:4.50px;overflow:visible" viewBox="6 8.590 12 7.410" preserveAspectRatio="none"><path fill="#222" stroke="#222" stroke-width="0.800" d="M16.590 8.590L12 13.170 7.410 8.590 6 10l6 6 6-6z"/></svg>
<svg class="ic" style="left:557.80px;top:101.40px;width:7.00px;height:4.50px;overflow:visible" viewBox="6 8.590 12 7.410" preserveAspectRatio="none"><path fill="#222" stroke="#222" stroke-width="0.800" d="M16.590 8.590L12 13.170 7.410 8.590 6 10l6 6 6-6z"/></svg>
<svg class="ic" style="left:641.80px;top:101.40px;width:7.00px;height:4.50px;overflow:visible" viewBox="6 8.590 12 7.410" preserveAspectRatio="none"><path fill="#222" stroke="#222" stroke-width="0.800" d="M16.590 8.590L12 13.170 7.410 8.590 6 10l6 6 6-6z"/></svg>
<svg class="ic" style="left:846.40px;top:122.20px;width:9.40px;height:8.40px" viewBox="2 2 20 20" preserveAspectRatio="none"><path fill="#9e9e9e" d="M11 7h2v2h-2zm0 4h2v6h-2zm1-9C6.480 2 2 6.480 2 12s4.480 10 10 10 10-4.480 10-10S17.520 2 12 2zm0 18c-4.410 0-8-3.590-8-8s3.590-8 8-8 8 3.590 8 8-3.590 8-8 8z"/></svg>
<svg class="ic" style="left:898.60px;top:537.20px;width:7.80px;height:7.60px" viewBox="5.590 6 12.820 12" preserveAspectRatio="none"><path fill="#c4c4c4" d="M18.410 16.590L13.820 12l4.590-4.590L17 6l-6 6 6 6zM6 6h2v12H6z"/></svg>
<svg class="ic" style="left:928.00px;top:537.20px;width:5.40px;height:7.60px" viewBox="8 6 7.410 12" preserveAspectRatio="none"><path fill="#c4c4c4" d="M15.410 7.410L14 6l-6 6 6 6 1.410-1.410L10.830 12z"/></svg>
<svg class="ic" style="left:954.30px;top:537.20px;width:5.40px;height:7.60px" viewBox="8.590 6 7.410 12" preserveAspectRatio="none"><path fill="#555" d="M10 6L8.590 7.410 13.170 12l-4.580 4.590L10 18l6-6z"/></svg>
<svg class="ic" style="left:980.60px;top:537.20px;width:8.30px;height:7.60px" viewBox="5.590 6 12.820 12" preserveAspectRatio="none"><path fill="#555" d="M5.590 7.410L10.180 12l-4.590 4.590L7 18l6-6-6-6zM16 6h2v12h-2z"/></svg>
<svg class="ic" style="left:801.70px;top:539.60px;width:5.90px;height:3.00px" viewBox="7 10 10 5" preserveAspectRatio="none"><path fill="#666" d="M7 10l5 5 5-5z"/></svg>

</div>
</div>
</body>
</html>
